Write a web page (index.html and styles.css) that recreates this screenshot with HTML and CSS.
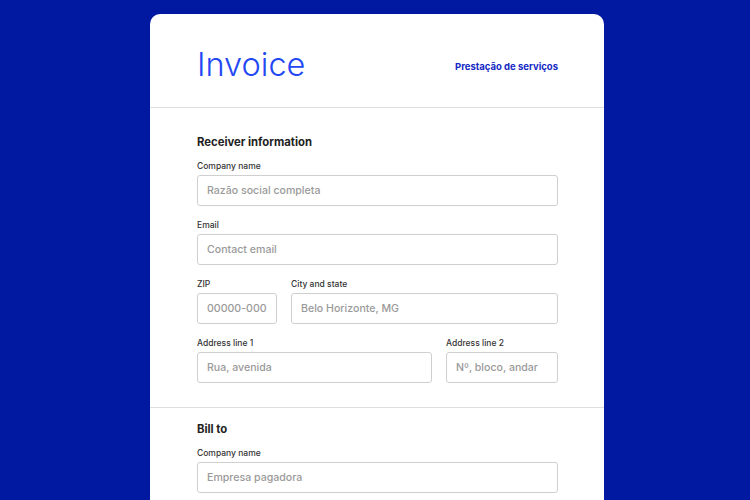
FILE: index.html
```html
<!DOCTYPE html>
<html lang="en">
  <head>
    <meta charset="UTF-8" />
    <meta name="viewport" content="width=device-width, initial-scale=1.0" />
    <title>Invoice</title>
    <link rel="stylesheet" href="styles.css">
  </head>
  <body>
    <div class="invoice-card">
      <div class="invoice-header">
        <h1>Invoice</h1>
        <span class="invoice-type">Prestação de serviços</span>
      </div>

      <form class="section">
        <h3>Receiver information</h3>
        <div class="field">
          <label>Company name</label>
          <input type="text" placeholder="Razão social completa" />
        </div>
        <div class="field">
          <label>Email</label>
          <input type="email" placeholder="Contact email" />
        </div>
        <div class="row">
          <div class="field zip">
            <label>ZIP</label>
            <input type="text" placeholder="00000-000" />
          </div>
          <div class="field grow">
            <label>City and state</label>
            <input type="text" placeholder="Belo Horizonte, MG" />
          </div>
        </div>
        <div class="row">
          <div class="field grow">
            <label>Address line 1</label>
            <input type="text" placeholder="Rua, avenida" />
          </div>
          <div class="field line2">
            <label>Address line 2</label>
            <input type="text" placeholder="Nº, bloco, andar" />
          </div>
        </div>
      </form>

      <form class="section bill">
        <h3>Bill to</h3>
        <div class="field">
          <label>Company name</label>
          <input type="text" placeholder="Empresa pagadora" />
        </div>
      </form>
    </div>
  </body>
</html>
```

FILE: styles.css
```css
body {
  margin: 0;
  font-family: Inter, "Noto Sans", sans-serif;
  background-color: #0019a0;
  height: 500px;
  overflow: hidden;
}
.invoice-card {
  background-color: white;
  width: 454px;
  margin: 14px 0 0 150px;
  border-radius: 10px 10px 0 0;
  min-height: 486px;
}
.invoice-header {
  height: 93px;
  display: flex;
  align-items: center;
  justify-content: space-between;
  padding: 0 46px 0 47px;
  border-bottom: 1px solid #dedede;
}
.invoice-header h1 {
  margin: 0;
  font-size: 32.5px;
  font-weight: 300;
  color: #2447f4;
  padding-top: 8px;
}
.invoice-type {
  font-size: 9.5px;
  font-weight: 700;
  color: #1428c4;
  padding-top: 12px;
}
.section {
  padding: 27px 46px 10px 47px;
  border-bottom: 1px solid #dedede;
}
.section.bill {
  padding-top: 14px;
  border-bottom: none;
}
.section h3 {
  margin: 0 0 12px;
  font-size: 11.3px;
  line-height: 14px;
  font-weight: 700;
  color: #222;
}
.field {
  display: flex;
  flex-direction: column;
  margin-bottom: 14px;
}
.field label {
  font-size: 8.5px;
  line-height: 11px;
  font-weight: 500;
  color: #333;
  margin-bottom: 3px;
}
.field input {
  box-sizing: border-box;
  height: 31px;
  width: 100%;
  padding: 0 8px 0 9px;
  border: 1.5px solid #cfcfcf;
  border-radius: 3px;
  font-family: inherit;
  font-size: 10.6px;
  font-weight: 500;
  color: #333;
  outline: none;
}
.field input::placeholder {
  color: #9a9a9a;
}
.row {
  display: flex;
  gap: 14px;
}
.zip {
  width: 80px;
}
.line2 {
  width: 112px;
}
.grow {
  flex: 1;
}
```
